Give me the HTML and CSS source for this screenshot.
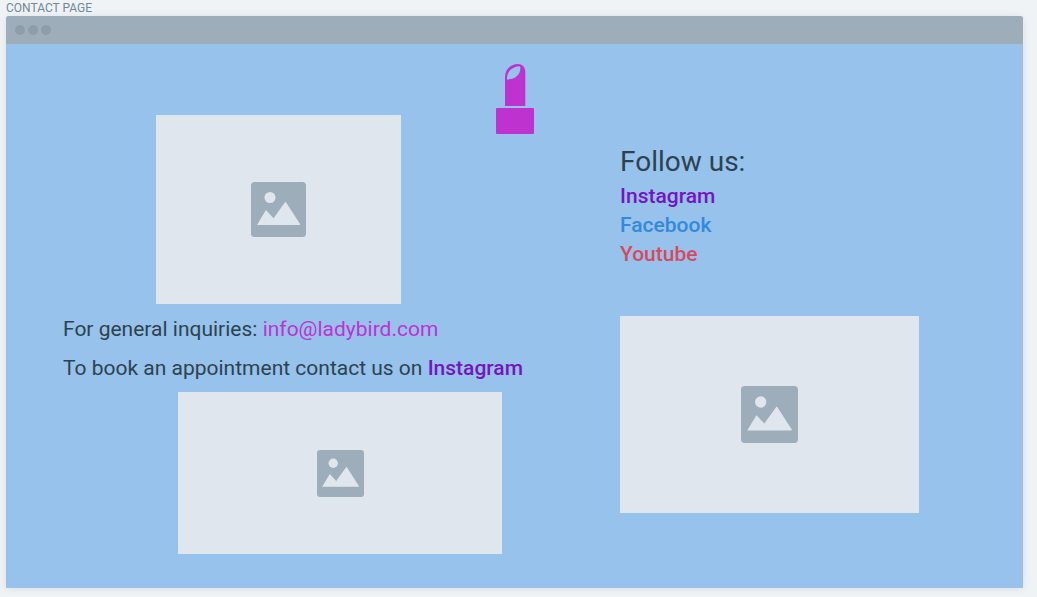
FILE: index.html
```html
<!DOCTYPE html>
<html lang="en">
<head>
<meta charset="utf-8">
<meta name="viewport" content="width=device-width, initial-scale=1">
<title>Contact page</title>
<link rel="stylesheet" href="styles.css">
</head>
<body>
<svg class="sprite" aria-hidden="true">
  <symbol id="picture" viewBox="0 0 55 55">
    <rect width="55" height="55" rx="3.5" fill="#9eadba"/>
    <circle cx="19" cy="15.5" r="5.5" fill="#dfe6ee"/>
    <path d="M6 43 L14.6 28.6 Q15 28 15.5 28.6 L22.5 36.3 L34 20.2 Q34.5 19.6 35 20.2 L49 42 Q49.4 43 48.5 43 Z" fill="#dfe6ee"/>
  </symbol>
</svg>
<h1 class="page-label">CONTACT PAGE</h1>
<div class="window">
  <div class="titlebar"><span class="dot"></span><span class="dot"></span><span class="dot"></span></div>
  <main class="content">
    <svg class="logo" viewBox="0 0 38 70" role="img" aria-label="Ladybird">
      <path fill="#be33d0" fill-rule="evenodd" d="M9 42 V13 C9 5 15 0 22 0 C26 0 29.3 3 29.3 7.5 V42 Z M11 15.5 C10.5 8.5 15.5 2.8 23.3 2.3 Q24.4 2.3 24.4 3.8 C24.4 11 19 15.5 11 15.5 Z"/>
      <rect x="0" y="44" width="38" height="26" rx="1" fill="#be33d0"/>
    </svg>
    <section class="contact">
      <div class="picture picture-top"><svg class="icon"><use href="#picture"/></svg></div>
      <p class="line">For general inquiries: <a class="email" href="mailto:info@ladybird.com">info@ladybird.com</a></p>
      <p class="line">To book an appointment contact us on <a class="instagram" href="#instagram">Instagram</a></p>
      <div class="picture picture-bottom"><svg class="icon"><use href="#picture"/></svg></div>
    </section>
    <section class="follow">
      <h2 class="follow-title">Follow us:</h2>
      <ul class="links">
        <li><a class="instagram" href="#instagram">Instagram</a></li>
        <li><a class="facebook" href="#facebook">Facebook</a></li>
        <li><a class="youtube" href="#youtube">Youtube</a></li>
      </ul>
      <div class="picture picture-side"><svg class="icon"><use href="#picture"/></svg></div>
    </section>
  </main>
</div>
</body>
</html>
```
FILE: styles.css
```css
* {
  box-sizing: border-box;
}

body {
  margin: 0;
  padding: 0 14px 9px 6px;
  background: #eff3f6;
  color: #2d4250;
  font-family: Roboto, "Liberation Sans", sans-serif;
}

.sprite {
  position: absolute;
  width: 0;
  height: 0;
}

.page-label {
  margin: 0;
  color: #738795;
  font-size: 12px;
  font-weight: 400;
  line-height: 16px;
}

.window {
  border-radius: 3px 3px 0 0;
  background: #96c2eb;
  box-shadow: 0 1px 8px rgba(0, 0, 0, 0.08);
}

.titlebar {
  display: flex;
  align-items: center;
  gap: 3px;
  height: 28px;
  padding-left: 9px;
  border-radius: 3px 3px 0 0;
  background: #9eadba;
}

.dot {
  width: 10px;
  height: 10px;
  border-radius: 50%;
  background: #8c9dab;
}

.content {
  display: grid;
  grid-template-columns: 614fr 403fr;
  padding: 20px 0 34px;
}

.logo {
  grid-area: 1 / 1 / 2 / 3;
  justify-self: center;
  width: 38px;
  height: 70px;
}

.contact {
  grid-area: 1 / 1;
  padding: 51px 0 0 57px;
}

.follow {
  grid-area: 1 / 2;
  padding-top: 80px;
}

.picture {
  display: flex;
  align-items: center;
  justify-content: center;
  max-width: 100%;
  background: #dfe6ee;
}

.picture-top {
  width: 245px;
  height: 189px;
  margin: 0 0 6px 93px;
}

.picture-bottom {
  width: 324px;
  height: 162px;
  margin: 4px 0 0 115px;
}

.picture-side {
  width: 299px;
  height: 197px;
  margin-top: 47px;
}

.icon {
  width: 55px;
  height: 55px;
}

.picture-bottom .icon {
  width: 47px;
  height: 47px;
}

.picture-side .icon {
  width: 57px;
  height: 57px;
}

.line {
  margin: 0;
  font-size: 21px;
  line-height: 39px;
}

.follow-title {
  margin: 0 0 2px;
  font-size: 28px;
  font-weight: 400;
  line-height: 36px;
}

.links {
  margin: 0;
  padding: 0;
  list-style: none;
  font-size: 21px;
  line-height: 29px;
}

a {
  text-decoration: none;
}

.email {
  color: #be33d0;
}

.instagram {
  color: #7514c4;
  font-weight: 500;
}

.facebook {
  color: #3389dc;
  font-weight: 500;
}

.youtube {
  color: #d64a61;
  font-weight: 500;
}
```
